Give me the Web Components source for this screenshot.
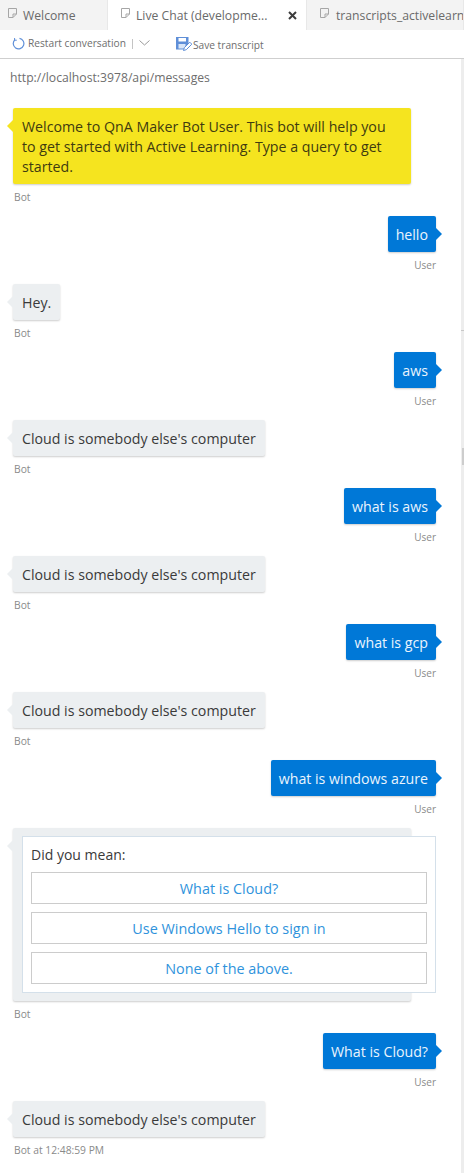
<!DOCTYPE html>
<html lang="en">
<head>
<meta charset="utf-8">
<title>Live Chat</title>
<style>
  html, body { margin: 0; padding: 0; background: #fff; }
  body { font-family: "Open Sans", "Noto Sans", sans-serif; overflow: hidden; }
</style>
</head>
<body>
<emu-window>
  <emu-tabs slot="tabs">
    <emu-tab style="width:108px">Welcome</emu-tab>
    <emu-tab active closable style="width:199px">Live Chat (developme...</emu-tab>
    <emu-tab wide style="flex:1 1 0">transcripts_activelearn</emu-tab>
  </emu-tabs>
  <emu-toolbar slot="toolbar"></emu-toolbar>
  <chat-log>
    <chat-msg from="bot" tone="yellow" label="Bot" style="width:398px">Welcome to QnA Maker Bot User. This bot will help you to get started with Active Learning. Type a query to get started.</chat-msg>
    <chat-msg from="user" label="User">hello</chat-msg>
    <chat-msg from="bot" label="Bot">Hey.</chat-msg>
    <chat-msg from="user" label="User">aws</chat-msg>
    <chat-msg from="bot" label="Bot">Cloud is somebody else's computer</chat-msg>
    <chat-msg from="user" label="User">what is aws</chat-msg>
    <chat-msg from="bot" label="Bot">Cloud is somebody else's computer</chat-msg>
    <chat-msg from="user" label="User">what is gcp</chat-msg>
    <chat-msg from="bot" label="Bot">Cloud is somebody else's computer</chat-msg>
    <chat-msg from="user" label="User">what is windows azure</chat-msg>
    <suggest-card label="Bot" title="Did you mean:">
      <suggest-btn>What is Cloud?</suggest-btn>
      <suggest-btn>Use Windows Hello to sign in</suggest-btn>
      <suggest-btn>None of the above.</suggest-btn>
    </suggest-card>
    <chat-msg from="user" label="User">What is Cloud?</chat-msg>
    <chat-msg from="bot" label="Bot at 12:48:59 PM">Cloud is somebody else's computer</chat-msg>
  </chat-log>
</emu-window>

<script>
const docIcon = `<svg width="11" height="12" viewBox="0 0 11 12" fill="none" stroke="#a6a6a6" stroke-width="1">
  <path d="M1.5 1.5h8v5.5l-3.5 3.5h-4.500z"/><path d="M9.500 7h-3.500v3.500"/></svg>`;

class EmuWindow extends HTMLElement {
    connectedCallback() {
        this.attachShadow({ mode: 'open' });
        this.shadowRoot.innerHTML = `
            <style>
                :host { display: flex; flex-direction: column; width: 464px; height: 1173px; overflow: hidden; }
                .body { flex: 1; display: flex; min-height: 0; }
                .main { flex: 1; min-width: 0; }
                .rail { width: 3px; background: #ededed; display: flex; flex-direction: column; }
                .tick { height: 1px; background: #c8c8c8; margin-top: 271px; }
                .thumb { height: 17px; background: #cdcdcd; margin: 117px 0 0 1px; }
            </style>
            <slot name="tabs"></slot>
            <slot name="toolbar"></slot>
            <div class="body">
                <div class="main"><slot></slot></div>
                <div class="rail"><div class="tick"></div><div class="thumb"></div></div>
            </div>
        `;
    }
}

class EmuTabs extends HTMLElement {
    connectedCallback() {
        this.attachShadow({ mode: 'open' });
        this.shadowRoot.innerHTML = `
            <style>
                :host { display: flex; height: 30px; background: #f3f3f3; overflow: hidden; }
            </style>
            <slot></slot>
        `;
    }
}

class EmuTab extends HTMLElement {
    connectedCallback() {
        this.attachShadow({ mode: 'open' });
        const close = this.hasAttribute('closable')
            ? `<svg class="close" width="9" height="9" viewBox="0 0 9 9" stroke="#3c3c3c" stroke-width="2"><path d="M1 1l7 7M8 1l-7 7"/></svg>` : '';
        this.shadowRoot.innerHTML = `
            <style>
                :host {
                    display: flex; align-items: center; box-sizing: border-box; flex: none;
                    padding-left: 7px; gap: 5px; height: 30px; overflow: hidden;
                    background: #f3f3f3; border-right: 1px solid #e8e8e8;
                    font-size: 12.200px; color: #6a6a6a; white-space: nowrap;
                }
                :host([active]) { background: #fff; padding-left: 12px; }
                :host([wide]) { padding-left: 12px; gap: 6px; }
                svg { flex: none; margin-top: -4px; }
                .label { flex: 1; }
                .close { margin: 0 9px 0 0; }
            </style>
            ${docIcon}<span class="label"><slot></slot></span>${close}
        `;
    }
}

class EmuToolbar extends HTMLElement {
    connectedCallback() {
        this.attachShadow({ mode: 'open' });
        this.shadowRoot.innerHTML = `
            <style>
                :host {
                    display: flex; align-items: center; box-sizing: border-box; height: 29px;
                    padding-left: 12px; border-bottom: 1px solid #cfcfcf;
                    font-size: 10.200px; color: #6e6e6e; white-space: nowrap;
                }
                .sep { width: 1px; height: 10px; background: #c4c4c4; margin: 0 6px 0 6px; }
                .restart { display: flex; align-items: center; gap: 3px; margin-top: -2px; }
                .save { display: flex; align-items: center; gap: 1px; margin-left: 26px; }
                .save span { margin-top: 2px; }
                .chev { margin-top: -2px; }
            </style>
            <div class="restart">
                <svg width="13" height="13" viewBox="0 0 13 13" fill="none" stroke="#5f8fd8" stroke-width="1.200">
                    <path d="M7.500 1.300a5.300 5.300 0 1 1-4.600 1.400"/>
                    <path d="M2.600 1v2.200h2.200" stroke-width="1"/>
                </svg>
                <span>Restart conversation</span>
            </div>
            <div class="sep"></div>
            <svg class="chev" width="11" height="6" viewBox="0 0 11 6" fill="none" stroke="#9a9a9a"><path d="M.5.500l5 4.500 5-4.500"/></svg>
            <div class="save">
                <svg width="16" height="15" viewBox="0 0 16 15">
                    <path d="M0 0h12.500v7l-5 5.500H0z" fill="#5f8fd8"/>
                    <path d="M2.500 1h7.500v3.500H2.500z" fill="#fff"/>
                    <path d="M2.500 7h7v4.500h-7z" fill="#d9e6f8"/>
                    <path d="M7.500 13.500l.8-2.800 5.500-5.500 2 2-5.500 5.500z" fill="#fff" stroke="#5f8fd8" stroke-width="1"/>
                </svg>
                <span>Save transcript</span>
            </div>
        `;
    }
}

class ChatLog extends HTMLElement {
    connectedCallback() {
        this.attachShadow({ mode: 'open' });
        this.shadowRoot.innerHTML = `
            <style>
                :host { display: flex; flex-direction: column; gap: 12px; padding: 0 25px 0 13px; }
                .url { font-size: 12.200px; color: #6e6e6e; height: 49px; margin: 0 0 -12px -3px; line-height: 37px; }
            </style>
            <div class="url">http://localhost:3978/api/messages</div>
            <slot></slot>
        `;
    }
}

class ChatMsg extends HTMLElement {
    connectedCallback() {
        this.attachShadow({ mode: 'open' });
        const label = this.getAttribute('label') || '';
        this.shadowRoot.innerHTML = `
            <style>
                :host { display: flex; flex-direction: column; align-items: flex-start; align-self: flex-start; }
                :host([from="user"]) { align-items: flex-end; align-self: flex-end; }
                .bubble {
                    position: relative; box-sizing: border-box; padding: 9px 9px 7px;
                    font-size: 14.200px; line-height: 20px; border-radius: 2px;
                    background: #eceff1; color: #3a3a3a;
                    box-shadow: 0 1px 2px rgba(0,0,0,.2);
                }
                :host([tone="yellow"]) .bubble { background: #f5e41f; color: #3f3b10; padding-right: 14px; }
                :host([from="user"]) .bubble { background: #0078d7; color: #eaf4fd; padding: 9px 8px 7px; }
                .bubble::before {
                    content: ""; position: absolute; top: 12px; left: -6px; width: 0; height: 0;
                    border-top: 6px solid transparent; border-bottom: 6px solid transparent;
                    border-right: 6px solid #eceff1;
                }
                :host([tone="yellow"]) .bubble::before { border-right-color: #f5e41f; }
                :host([from="user"]) .bubble::before {
                    left: auto; right: -6px; border-right: 0; border-left: 6px solid #0078d7;
                }
                .who { margin: 6px 0 0 1px; font-size: 10.300px; line-height: 14px; color: #8a8a8a; }
                :host([from="user"]) .who { margin-left: 0; font-size: 10px; }
            </style>
            <div class="bubble"><slot></slot></div>
            <div class="who">${label}</div>
        `;
    }
}

class SuggestCard extends HTMLElement {
    connectedCallback() {
        this.attachShadow({ mode: 'open' });
        this.shadowRoot.innerHTML = `
            <style>
                :host { display: flex; flex-direction: column; align-self: flex-start; width: 398px; }
                .bubble {
                    position: relative; box-sizing: border-box; height: 173px; padding: 8px 0 0 9px;
                    background: #eceff1; border-radius: 2px; box-shadow: 0 1px 2px rgba(0,0,0,.2);
                }
                .bubble::before {
                    content: ""; position: absolute; top: 12px; left: -6px; width: 0; height: 0;
                    border-top: 6px solid transparent; border-bottom: 6px solid transparent;
                    border-right: 6px solid #eceff1;
                }
                .card {
                    box-sizing: border-box; width: 414px; height: 157px; padding: 8px;
                    background: #fff; border: 1px solid #d4e0ea;
                    display: flex; flex-direction: column; gap: 8px;
                }
                .title { font-size: 14px; line-height: 19px; color: #3a3a3a; }
                .who { margin: 6px 0 0 1px; font-size: 10.300px; line-height: 14px; color: #8a8a8a; }
            </style>
            <div class="bubble">
                <div class="card">
                    <div class="title">${this.getAttribute('title')}</div>
                    <slot></slot>
                </div>
            </div>
            <div class="who">${this.getAttribute('label')}</div>
        `;
    }
}

class SuggestBtn extends HTMLElement {
    connectedCallback() {
        this.attachShadow({ mode: 'open' });
        this.shadowRoot.innerHTML = `
            <style>
                :host {
                    display: flex; align-items: center; justify-content: center;
                    box-sizing: border-box; height: 32px; background: #fff;
                    border: 1px solid #cccccc; font-size: 14.400px; color: #2f93dc;
                }
            </style>
            <slot></slot>
        `;
    }
}

customElements.define('emu-window', EmuWindow);
customElements.define('emu-tabs', EmuTabs);
customElements.define('emu-tab', EmuTab);
customElements.define('emu-toolbar', EmuToolbar);
customElements.define('chat-log', ChatLog);
customElements.define('chat-msg', ChatMsg);
customElements.define('suggest-card', SuggestCard);
customElements.define('suggest-btn', SuggestBtn);
</script>
</body>
</html>
